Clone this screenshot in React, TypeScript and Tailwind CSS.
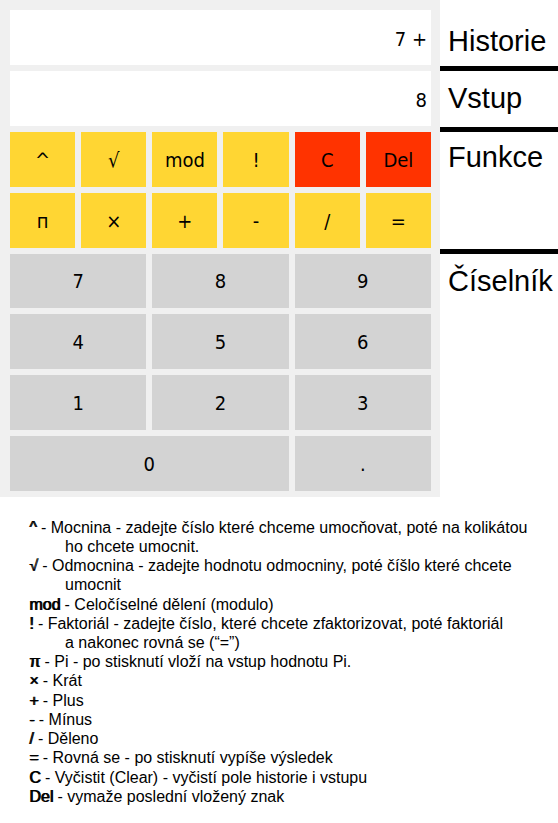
type Key = { label: string; name: string; tone: string; span: string };

const YELLOW = 'bg-[#ffd633]';
const RED = 'bg-[#ff3300]';
const GRAY = 'bg-[#d3d3d3]';

const keys: Key[] = [
  { label: '^', name: 'Mocnina', tone: YELLOW, span: 'col-span-1' },
  { label: '√', name: 'Odmocnina', tone: YELLOW, span: 'col-span-1' },
  { label: 'mod', name: 'Modulo', tone: YELLOW, span: 'col-span-1' },
  { label: '!', name: 'Faktoriál', tone: YELLOW, span: 'col-span-1' },
  { label: 'C', name: 'Vyčistit', tone: RED, span: 'col-span-1' },
  { label: 'Del', name: 'Vymazat', tone: RED, span: 'col-span-1' },
  { label: 'п', name: 'Pi', tone: YELLOW, span: 'col-span-1' },
  { label: '×', name: 'Krát', tone: YELLOW, span: 'col-span-1' },
  { label: '+', name: 'Plus', tone: YELLOW, span: 'col-span-1' },
  { label: '-', name: 'Mínus', tone: YELLOW, span: 'col-span-1' },
  { label: '/', name: 'Děleno', tone: YELLOW, span: 'col-span-1' },
  { label: '=', name: 'Rovná se', tone: YELLOW, span: 'col-span-1' },
  ...['7', '8', '9', '4', '5', '6', '1', '2', '3'].map((digit) => ({
    label: digit,
    name: digit,
    tone: GRAY,
    span: 'col-span-2',
  })),
  { label: '0', name: '0', tone: GRAY, span: 'col-span-4' },
  { label: '.', name: 'Desetinná tečka', tone: GRAY, span: 'col-span-2' },
];

const legend: { sign: string; lines: string[] }[] = [
  {
    sign: '^',
    lines: ['Mocnina - zadejte číslo které chceme umocňovat, poté na kolikátou', 'ho chcete umocnit.'],
  },
  {
    sign: '√',
    lines: ['Odmocnina - zadejte hodnotu odmocniny, poté číšlo které chcete', 'umocnit'],
  },
  { sign: 'mod', lines: ['Celočíselné dělení (modulo)'] },
  {
    sign: '!',
    lines: ['Faktoriál - zadejte číslo, které chcete zfaktorizovat, poté faktoriál', 'a nakonec rovná se (“=”)'],
  },
  { sign: 'π', lines: ['Pi - po stisknutí vloží na vstup hodnotu Pi.'] },
  { sign: '×', lines: ['Krát'] },
  { sign: '+', lines: ['Plus'] },
  { sign: '-', lines: ['Mínus'] },
  { sign: '/', lines: ['Děleno'] },
  { sign: '=', lines: ['Rovná se - po stisknutí vypíše výsledek'] },
  { sign: 'C', lines: ['Vyčistit (Clear) - vyčistí pole historie i vstupu'] },
  { sign: 'Del', lines: ['vymaže poslední vložený znak'] },
];

function Display({ id, value }: { id: string; value: string }) {
  return (
    <input
      id={id}
      readOnly
      value={value}
      className="col-span-6 min-w-0 bg-white px-1 pt-0.5 text-right outline-none"
    />
  );
}

function Calculator() {
  return (
    <div className="grid min-w-0 flex-1 grid-cols-6 grid-rows-[repeat(4,55px)_54px_repeat(3,55px)] gap-1.5 bg-[#f0f0f0] pt-2.5 pr-[9px] pb-1.5 pl-2.5 font-['DejaVu_Sans_Condensed','DejaVu_Sans',sans-serif] text-[20px]">
      <Display id="historie" value="7 +" />
      <Display id="vstup" value="8" />
      {keys.map((key) => (
        <button key={key.name} type="button" aria-label={key.name} className={`${key.span} ${key.tone}`}>
          {key.label}
        </button>
      ))}
    </div>
  );
}

function Labels() {
  return (
    <div className="flex w-[118px] shrink-0 flex-col text-[29px] leading-8">
      <label htmlFor="historie" className="block h-[71px] border-b-5 border-black pt-[25px] pl-2">
        Historie
      </label>
      <label htmlFor="vstup" className="block h-[61px] border-b-5 border-black pt-[11px] pl-2">
        Vstup
      </label>
      <h2 className="h-[122px] border-b-5 border-black pt-[9px] pl-2">Funkce</h2>
      <h2 className="pt-[11px] pl-2">Číselník</h2>
    </div>
  );
}

function Legend() {
  return (
    <ul className="flex flex-1 flex-col justify-between pt-[21px] pr-4 pb-[17px] pl-[29px] text-base leading-[19px]">
      {legend.map(({ sign, lines }) => (
        <li key={sign} className="pl-9 -indent-9">
          <b className="font-normal [text-shadow:1px_0_0_black]">{sign}</b> - {lines[0]}
          {lines.slice(1).map((line) => (
            <span key={line} className="block indent-0">
              {line}
            </span>
          ))}
        </li>
      ))}
    </ul>
  );
}

export default function App() {
  return (
    <main className="flex min-h-screen flex-col bg-white font-['Liberation_Sans',Arial,sans-serif] text-black">
      <div className="flex">
        <Calculator />
        <Labels />
      </div>
      <Legend />
    </main>
  );
}
